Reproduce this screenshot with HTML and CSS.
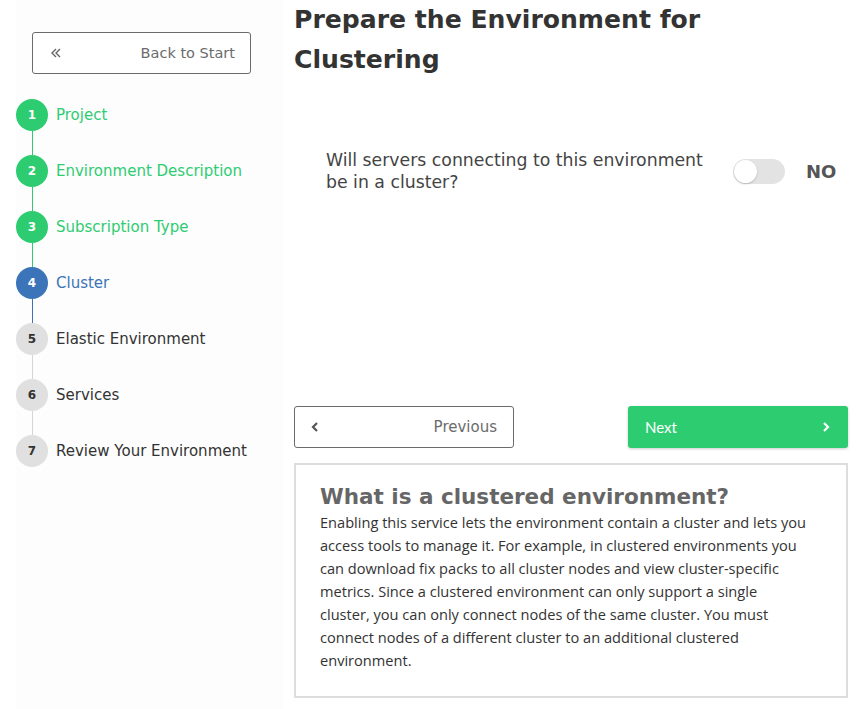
FILE: index.html
```html
<!DOCTYPE html>
<html>
<head>
<meta charset="utf-8">
<link rel="stylesheet" href="styles.css">
</head>
<body>
<div class="page">
  <aside class="sidebar">
    <div class="back-wrap">
      <button class="back-btn">
        <svg class="dbl" width="12" height="12" viewBox="0 0 12 12"><path d="M6 2 L2 6 L6 10 M10 2 L6 6 L10 10" fill="none" stroke="#666" stroke-width="1.4"/></svg>
        <span>Back to Start</span>
      </button>
    </div>
    <ol class="steps">
      <li class="step done"><span class="num">1</span><span class="label">Project</span></li>
      <li class="step done"><span class="num">2</span><span class="label">Environment Description</span></li>
      <li class="step done"><span class="num">3</span><span class="label">Subscription Type</span></li>
      <li class="step active"><span class="num">4</span><span class="label">Cluster</span></li>
      <li class="step"><span class="num">5</span><span class="label">Elastic Environment</span></li>
      <li class="step"><span class="num">6</span><span class="label">Services</span></li>
      <li class="step last"><span class="num">7</span><span class="label">Review Your Environment</span></li>
    </ol>
  </aside>
  <main class="main">
    <h1 class="title">Prepare the Environment for Clustering</h1>
    <div class="question">
      <p class="q-text">Will servers connecting to this environment be in a cluster?</p>
      <div class="toggle"><span class="knob"></span></div>
      <span class="toggle-label">NO</span>
    </div>
    <div class="nav">
      <button class="prev-btn">
        <svg width="10" height="12" viewBox="0 0 10 12"><path d="M7 2 L3 6 L7 10" fill="none" stroke="#555" stroke-width="2.2"/></svg>
        <span>Previous</span>
      </button>
      <button class="next-btn">
        <span>Next</span>
        <svg width="10" height="12" viewBox="0 0 10 12"><path d="M3 2 L7 6 L3 10" fill="none" stroke="#fff" stroke-width="2.2"/></svg>
      </button>
    </div>
    <section class="info">
      <h2>What is a clustered environment?</h2>
      <p>Enabling this service lets the environment contain a cluster and lets you access tools to manage it. For example, in clustered environments you can download fix packs to all cluster nodes and view cluster-specific metrics. Since a clustered environment can only support a single cluster, you can only connect nodes of the same cluster. You must connect nodes of a different cluster to an additional clustered environment.</p>
    </section>
  </main>
</div>
</body>
</html>
```

FILE: styles.css
```css
* { box-sizing: border-box; }
html, body { margin: 0; padding: 0; background: #fff; }
body { font-family: "DejaVu Sans", sans-serif; color: #333; }

.page {
  display: flex;
  padding: 0 10px 0 16px;
  height: 709px;
}

.sidebar {
  width: 267px;
  flex: none;
  background: #fdfdfd;
  padding-top: 32px;
}

.back-wrap { padding-left: 16px; }

.back-btn {
  width: 219px;
  height: 42px;
  border: 1px solid #6b6b6b;
  border-radius: 3px;
  background: #fff;
  display: flex;
  align-items: center;
  justify-content: space-between;
  padding: 0 15px 0 17px;
  font-family: "DejaVu Sans", sans-serif;
  font-size: 14.5px;
  color: #6b6b6b;
}

.steps {
  list-style: none;
  margin: 25px 0 0 0;
  padding: 0;
}

.step {
  position: relative;
  display: flex;
  align-items: center;
  height: 32px;
  margin-bottom: 24px;
}

.step::after {
  content: "";
  position: absolute;
  left: 16px;
  top: 32px;
  width: 1px;
  height: 24px;
  background: #d6d6d6;
}
.step.done::after { background: #2ecc71; }
.step.active::after { background: #3b74b8; }
.step.last::after { display: none; }

.num {
  width: 32px;
  height: 32px;
  border-radius: 50%;
  background: #e0e0e0;
  color: #333;
  font-size: 12px;
  font-weight: 700;
  display: flex;
  align-items: center;
  justify-content: center;
  flex: none;
}
.step.done .num { background: #2ecc71; color: #fff; }
.step.active .num { background: #3b74b8; color: #fff; }

.label {
  margin-left: 8px;
  font-size: 15px;
  color: #333;
}
.step.done .label { color: #2ecc71; }
.step.active .label { color: #3b74b8; }

.main {
  margin-left: 11px;
  width: 554px;
  flex: none;
}

.title {
  margin: 0;
  font-size: 25.1px;
  font-weight: 700;
  line-height: 40px;
  color: #333;
  width: 440px;
}

.question {
  display: flex;
  align-items: center;
  margin-top: 69px;
  padding-left: 32px;
}

.q-text {
  margin: 0;
  width: 392px;
  font-size: 17.3px;
  line-height: 22px;
  color: #444;
}

.toggle {
  margin-left: 15px;
  width: 52px;
  height: 25px;
  border-radius: 13px;
  background: #e3e3e3;
  position: relative;
  flex: none;
}
.knob {
  position: absolute;
  left: 1px;
  top: 1px;
  width: 23px;
  height: 23px;
  border-radius: 50%;
  background: #fff;
  box-shadow: 0 1px 2px rgba(0,0,0,0.2);
}

.toggle-label {
  margin-left: 21px;
  font-size: 18px;
  font-weight: 700;
  color: #555;
  line-height: 25px;
}

.nav {
  display: flex;
  justify-content: space-between;
  margin-top: 213px;
}

.prev-btn, .next-btn {
  width: 220px;
  height: 42px;
  border-radius: 3px;
  display: flex;
  align-items: center;
  justify-content: space-between;
  font-size: 15px;
}

.prev-btn {
  background: #fff;
  border: 1px solid #6b6b6b;
  color: #6b6b6b;
  padding: 0 16px 0 15px;
  font-family: "DejaVu Sans", sans-serif;
}

.next-btn {
  background: #2ecc71;
  border: none;
  color: #fff;
  padding: 0 17px 0 17px;
  font-family: Lato, sans-serif;
  box-shadow: 0 1px 3px rgba(0,0,0,0.2);
}

.info {
  margin-top: 15px;
  border: 2px solid #ddd;
  padding: 18px 37px 18px 24px;
  height: 235px;
}

.info h2 {
  margin: 0;
  font-size: 21.5px;
  font-weight: 700;
  color: #666;
  line-height: 28px;
  white-space: nowrap;
}

.info p {
  margin: 0;
  font-family: "Open Sans", sans-serif;
  font-size: 14.6px;
  line-height: 23px;
  color: #333;
}
```
